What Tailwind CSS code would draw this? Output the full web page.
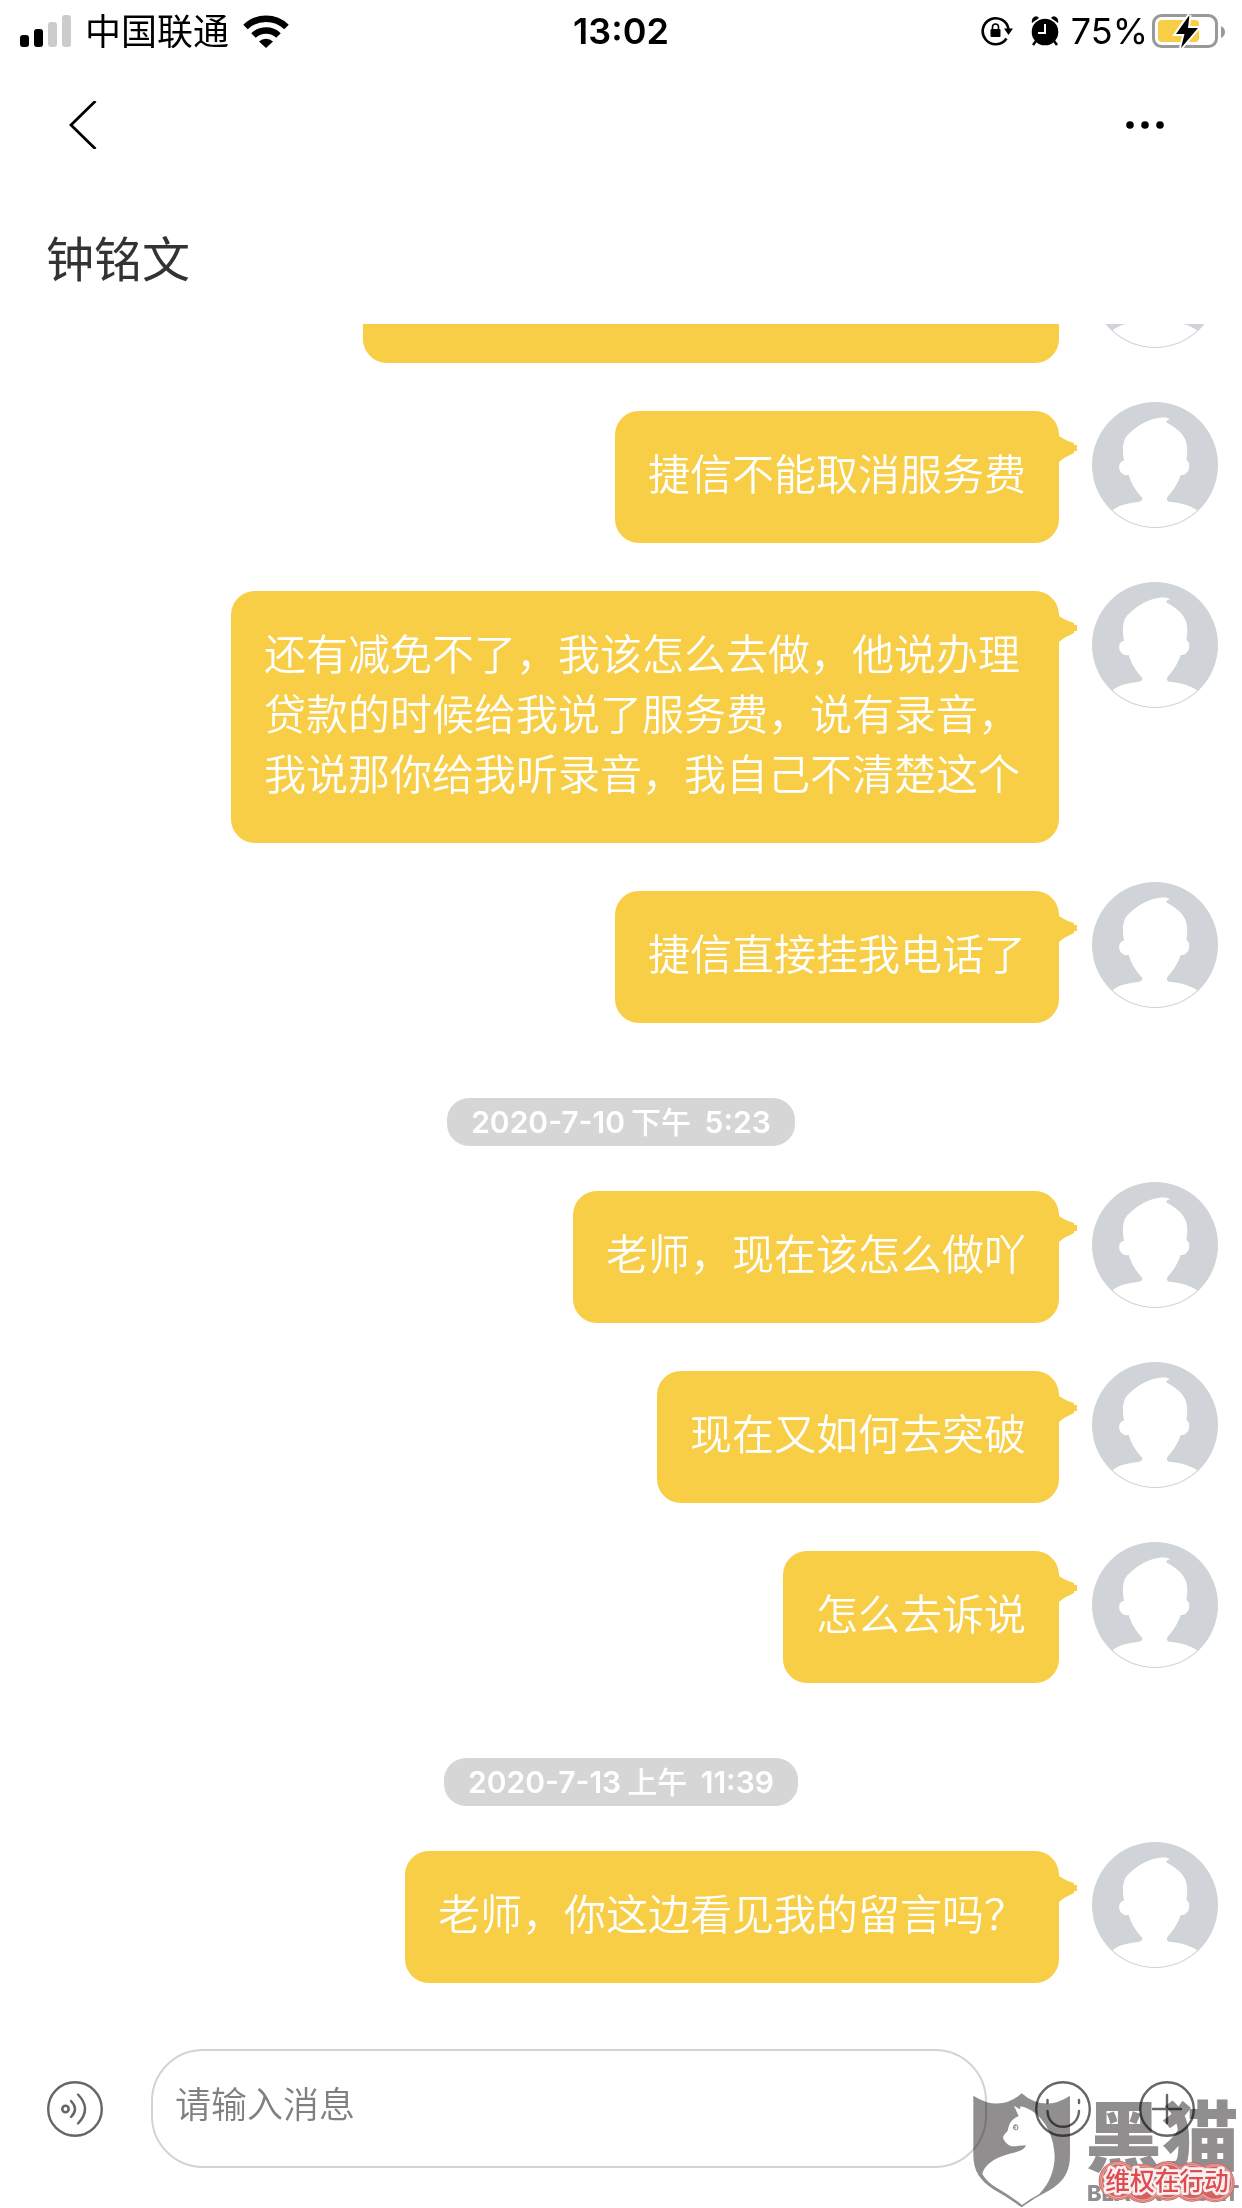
<!DOCTYPE html>
<html lang="zh-CN">

<head>
    <meta charset="UTF-8">
    <meta name="viewport" content="width=device-width, initial-scale=1.0">
    <title>钟铭文</title>
    <!-- Tailwind CSS CDN -->
    <script src="https://cdn.jsdelivr.net/npm/@tailwindcss/browser@4"></script>
    <style>
        body {
            font-family: 'Inter', 'Noto Sans CJK SC', sans-serif;
        }

        .bubble,
        .cjk {
            font-family: 'Noto Sans CJK SC', sans-serif;
        }
    </style>
</head>

<body class="relative h-screen bg-white flex flex-col overflow-hidden text-black">

    <!-- Shared shapes -->
    <svg class="absolute size-0">
        <symbol id="avatar" viewBox="0 0 378 378">
            <clipPath id="avatarClip">
                <circle cx="189" cy="189" r="186" />
            </clipPath>
            <circle cx="189" cy="189" r="189" fill="#d0d3d8" />
            <g clip-path="url(#avatarClip)" fill="#fff">
                <path d="M96 176C90 150 91 116 106 100C130 74 168 50 204 47C218 46 230 48 235 52C229 53 223 56 222 61C246 74 278 94 284 126C287 142 286 160 283 175C297 178 296 220 266 219C260 240 244 266 228 283C222 290 224 299 234 300C264 302 290 308 315 325C330 335 300 400 189 400C78 400 50 335 62 325C80 308 110 304 138 300C150 298 154 292 148 284C132 266 118 246 110 219C78 224 72 180 96 176Z" />
            </g>
        </symbol>
        <symbol id="tail" viewBox="0 0 18 26">
            <path d="M0 0L5 3L9 5L15 7V9H18V15H15V17L9 20L5 22L0 26Z" fill="#f7ce46" />
        </symbol>
    </svg>

    <!-- Status bar -->
    <div class="grid grid-cols-3 items-center h-[62px] shrink-0 px-5">
        <div class="flex items-center">
            <svg class="w-[51px] h-[32px]" viewBox="0 0 51 32">
                <rect x="0" y="20" width="9" height="12" rx="3" />
                <rect x="14" y="14" width="9" height="18" rx="3" />
                <rect x="28" y="7" width="9" height="25" rx="3" fill="#ccc" />
                <rect x="42" y="0" width="9" height="32" rx="3" fill="#ccc" />
            </svg>
            <span class="cjk ml-[14px] pb-1 text-[36px] leading-[48px] whitespace-nowrap">中国联通</span>
            <svg class="ml-[14px] w-[46px] h-[33px]" viewBox="0 0 46 33" fill="none" stroke="#000">
                <path d="M2.500 12A29.500 29.500 0 0 1 43.500 12" stroke-width="6.500" />
                <path d="M10.500 20.500A18 18 0 0 1 35.500 20.500" stroke-width="6.500" />
                <path d="M16 26.500A10 10 0 0 1 30 26.500L23 33Z" fill="#000" stroke="none" />
            </svg>
        </div>
        <div class="text-center text-[36px] leading-[48px] font-semibold">13:02</div>
        <div class="flex items-center justify-end -mr-1">
            <svg class="w-[32px] h-[30px]" viewBox="0 0 32 30">
                <path d="M25.500 22.500A13 13 0 1 1 27.500 13" fill="none" stroke="#000" stroke-width="2.600" />
                <path d="M23 12.500H32L27.500 19Z" />
                <rect x="9.500" y="13" width="10" height="8" rx="1" />
                <path d="M11.500 13V11Q11.500 8 14.500 8T17.500 11V13" fill="none" stroke="#000" stroke-width="1.600" />
            </svg>
            <svg class="ml-[18px] w-[28px] h-[30px]" viewBox="0 0 28 30">
                <circle cx="14" cy="16" r="13.300" />
                <path d="M1 7Q0 3 3 1T8 2ZM27 7Q28 3 25 1T20 2Z" />
                <path d="M5 25L2 29M23 25L26 29" stroke="#000" stroke-width="2.500" />
                <path d="M14 8V17H7" fill="none" stroke="#fff" stroke-width="2" />
            </svg>
            <span class="ml-3 text-[36px] leading-[48px]">75%</span>
            <svg class="ml-1 w-[74px] h-[38px]" viewBox="0 0 74 38">
                <rect x="1.500" y="3.500" width="63" height="31" rx="8" fill="#fff" stroke="#999" stroke-width="3" />
                <path d="M69 14Q73 16 73 20T69 26Z" fill="#999" />
                <rect x="6" y="8" width="41" height="22" rx="4" fill="#f7ce46" />
                <path d="M37.500 3L24 22H32.500L29 36L46 16H36Z" fill="#000" stroke="#fff" stroke-width="4" paint-order="stroke" />
            </svg>
        </div>
    </div>

    <!-- Navigation -->
    <header class="shrink-0">
        <nav class="flex items-center justify-between h-[126px] pl-[69px] pr-[77px]">
            <button type="button" aria-label="返回">
                <svg class="w-[28px] h-[48px]" viewBox="0 0 28 48" fill="none" stroke="#000" stroke-width="2.800">
                    <path d="M26.500 0L2 24L26.500 48" />
                </svg>
            </button>
            <button type="button" aria-label="更多">
                <svg class="w-[40px] h-[10px]" viewBox="0 0 40 10">
                    <circle cx="5" cy="5" r="3.800" />
                    <circle cx="20" cy="5" r="3.800" />
                    <circle cx="35" cy="5" r="3.800" />
                </svg>
            </button>
        </nav>
        <h1 class="cjk h-[136px] px-[46px] pt-8 text-[48px] leading-[72px] text-[#333]">钟铭文</h1>
    </header>

    <!-- Messages, anchored to the newest one -->
    <main class="flex-1 min-h-0 overflow-hidden flex flex-col justify-end gap-[39px] pr-6 pb-9 text-[42px] leading-[60px] font-[350] text-white">
        <div class="flex justify-end items-start gap-[33px] shrink-0">
            <div class="bubble relative mt-[9px] w-[696px] h-[132px] rounded-[24px] bg-[#f7ce46]"></div>
            <svg class="size-[126px] shrink-0"><use href="#avatar" /></svg>
        </div>
        <div class="flex justify-end items-start gap-[33px] shrink-0">
            <div class="bubble relative mt-[9px] max-w-[828px] px-[33px] pt-[31px] pb-[41px] rounded-[24px] bg-[#f7ce46]">
                捷信不能取消服务费
                <svg class="absolute left-full top-[25px] w-[18px] h-[26px]"><use href="#tail" /></svg>
            </div>
            <svg class="size-[126px] shrink-0"><use href="#avatar" /></svg>
        </div>
        <div class="flex justify-end items-start gap-[33px] shrink-0">
            <div class="bubble relative mt-[9px] max-w-[828px] px-[33px] pt-[31px] pb-[41px] rounded-[24px] bg-[#f7ce46]">
                还有减免不了，我该怎么去做，他说办理贷款的时候给我说了服务费，说有录音，我说那你给我听录音，我自己不清楚这个
                <svg class="absolute left-full top-[25px] w-[18px] h-[26px]"><use href="#tail" /></svg>
            </div>
            <svg class="size-[126px] shrink-0"><use href="#avatar" /></svg>
        </div>
        <div class="flex justify-end items-start gap-[33px] shrink-0">
            <div class="bubble relative mt-[9px] max-w-[828px] px-[33px] pt-[31px] pb-[41px] rounded-[24px] bg-[#f7ce46]">
                捷信直接挂我电话了
                <svg class="absolute left-full top-[25px] w-[18px] h-[26px]"><use href="#tail" /></svg>
            </div>
            <svg class="size-[126px] shrink-0"><use href="#avatar" /></svg>
        </div>

        <time class="self-center shrink-0 mt-9 -mb-[3px] -mr-6 px-6 rounded-[22px] bg-[#d6d6d6] text-[30px] leading-[48px] font-semibold">2020-7-10<span class="mx-[6px] font-medium">下午</span> 5:23</time>

        <div class="flex justify-end items-start gap-[33px] shrink-0">
            <div class="bubble relative mt-[9px] max-w-[828px] px-[33px] pt-[31px] pb-[41px] rounded-[24px] bg-[#f7ce46]">
                老师，现在该怎么做吖
                <svg class="absolute left-full top-[25px] w-[18px] h-[26px]"><use href="#tail" /></svg>
            </div>
            <svg class="size-[126px] shrink-0"><use href="#avatar" /></svg>
        </div>
        <div class="flex justify-end items-start gap-[33px] shrink-0">
            <div class="bubble relative mt-[9px] max-w-[828px] px-[33px] pt-[31px] pb-[41px] rounded-[24px] bg-[#f7ce46]">
                现在又如何去突破
                <svg class="absolute left-full top-[25px] w-[18px] h-[26px]"><use href="#tail" /></svg>
            </div>
            <svg class="size-[126px] shrink-0"><use href="#avatar" /></svg>
        </div>
        <div class="flex justify-end items-start gap-[33px] shrink-0">
            <div class="bubble relative mt-[9px] max-w-[828px] px-[33px] pt-[31px] pb-[41px] rounded-[24px] bg-[#f7ce46]">
                怎么去诉说
                <svg class="absolute left-full top-[25px] w-[18px] h-[26px]"><use href="#tail" /></svg>
            </div>
            <svg class="size-[126px] shrink-0"><use href="#avatar" /></svg>
        </div>

        <time class="self-center shrink-0 mt-9 -mb-[3px] -mr-6 px-6 rounded-[22px] bg-[#d6d6d6] text-[30px] leading-[48px] font-semibold">2020-7-13<span class="mx-[6px] font-medium">上午</span> 11:39</time>

        <div class="flex justify-end items-start gap-[33px] shrink-0">
            <div class="bubble relative mt-[9px] max-w-[828px] px-[33px] pt-[31px] pb-[41px] rounded-[24px] bg-[#f7ce46]">
                老师，你这边看见我的留言吗？
                <svg class="absolute left-full top-[25px] w-[18px] h-[26px]"><use href="#tail" /></svg>
            </div>
            <svg class="size-[126px] shrink-0"><use href="#avatar" /></svg>
        </div>
    </main>

    <!-- Composer -->
    <form class="shrink-0 flex items-center gap-12 px-[47px] pt-[30px] pb-10">
        <button type="button" aria-label="语音">
            <svg class="size-[56px]" viewBox="0 0 56 56" fill="none" stroke="#666" stroke-width="2.400" stroke-linecap="round">
                <circle cx="28" cy="28" r="26.800" />
                <circle cx="18.500" cy="28" r="3.200" stroke-width="2.600" />
                <path d="M24 20Q32 28 24 36" />
                <path d="M31 13.500Q45 28 31 42.500" />
            </svg>
        </button>
        <input id="message" type="text" aria-label="消息" placeholder="请输入消息"
            class="cjk flex-1 min-w-0 h-[119px] rounded-[52px] border-2 border-[#d0d3d8] px-[22px] pb-[14px] text-[36px] font-[350] placeholder:text-[#808080] focus:outline-none">
        <button type="button" aria-label="表情">
            <svg class="size-[56px]" viewBox="0 0 56 56" fill="none" stroke="#666" stroke-width="2.400" stroke-linecap="round">
                <circle cx="28" cy="28" r="26.800" />
                <path d="M12.500 19V22M44 19V22M12.500 30C13 51 43 51 44 30" />
            </svg>
        </button>
        <button type="button" aria-label="添加">
            <svg class="size-[56px]" viewBox="0 0 56 56" fill="none" stroke="#666" stroke-width="2.400" stroke-linecap="round">
                <circle cx="28" cy="28" r="26.800" />
                <path d="M28 14V42M14 28H42" />
            </svg>
        </button>
    </form>

    <!-- Watermark -->
    <svg class="absolute right-0 bottom-0 w-[270px] h-[118px] mix-blend-multiply pointer-events-none" viewBox="96 180 810 354">
        <g fill="#908e8f">
            <path fill-rule="evenodd" d="M100 197Q180 248 245 190Q312 248 390 197V375C390 430 366 458 330 480Q285 502 245 532Q203 502 160 478C122 452 100 425 100 375ZM222 227L236 259C216 266 206 282 203 303C196 311 189 316 189 324C194 336 205 347 216 349L258 346C250 368 214 366 180 381C152 393 132 410 127 432Q142 458 170 473Q210 496 246 525Q268 508 297 493C330 460 344 418 344 378C342 310 304 242 242 229L240 238Z" />
            <ellipse cx="227" cy="292" rx="8" ry="9" />
            <text x="436" y="404" font-family="Noto Sans CJK SC, sans-serif" font-weight="900" font-size="230">黑猫</text>
            <text x="441" y="512" font-family="Inter, sans-serif" font-weight="800" font-size="66">BLACK</text>
            <text x="898" y="512" text-anchor="end" font-family="Inter, sans-serif" font-weight="800" font-size="66">CAT</text>
        </g>
        <path d="M223 287L228 292L224 298M231 286L229 298" fill="none" stroke="#fff" stroke-width="3" />
    </svg>
    <!-- Slogan sticker -->
    <svg class="absolute right-0 bottom-0 w-[270px] h-[118px] pointer-events-none" viewBox="96 180 810 354">
        <g fill="none" stroke-linecap="round">
            <path d="M535 452h0M608 460h0M682 453h0M756 456h0M825 458h0" stroke="#c4605e" stroke-width="118" />
            <path d="M535 452h0M608 460h0M682 453h0M756 456h0M825 458h0" stroke="#e79a96" stroke-width="114" />
            <path d="M535 452h0M608 460h0M682 453h0M756 456h0M825 458h0" stroke="#cf6f6b" stroke-width="108" />
            <path d="M535 452h0M608 460h0M682 453h0M756 456h0M825 458h0" stroke="#eba7a2" stroke-width="104" />
            <path d="M535 452h0M608 460h0M682 453h0M756 456h0M825 458h0" stroke="#d4625f" stroke-width="97" />
        </g>
        <text x="496" y="481" font-family="Noto Sans CJK SC, sans-serif" font-weight="500" font-size="74" fill="#e04b50" stroke="#f6f1f0" stroke-width="16" stroke-linejoin="round" paint-order="stroke">维权在行动</text>
    </svg>

</body>

</html>
